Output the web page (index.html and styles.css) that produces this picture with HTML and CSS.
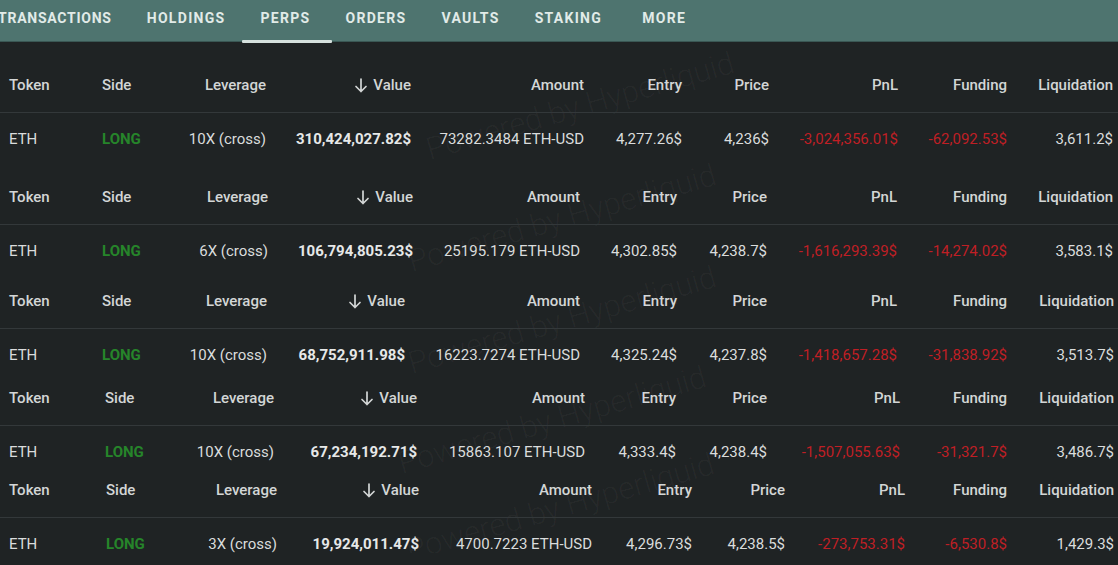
FILE: index.html
```html
<!DOCTYPE html>
<html>
<head>
<meta charset="utf-8">
<link rel="stylesheet" href="styles.css">
</head>
<body>
<nav class="nav">
  <div class="tab first">TRANSACTIONS</div>
  <div class="tab">HOLDINGS</div>
  <div class="tab active">PERPS</div>
  <div class="tab">ORDERS</div>
  <div class="tab">VAULTS</div>
  <div class="tab">STAKING</div>
  <div class="tab more">MORE</div>
</nav>

<main class="list">
  <section class="sec s1">
    <div class="wm">Powered by Hyperliquid</div>
    <div class="row head">
      <div>Token</div><div>Side</div><div class="r">Leverage</div>
      <div class="r val-h"><svg class="arr" viewBox="0 0 14 15"><path d="M7 1V13.5M2 8.5L7 13.5L12 8.5"/></svg>Value</div>
      <div class="r">Amount</div><div class="r">Entry</div><div class="r">Price</div><div class="r">PnL</div><div class="r">Funding</div><div class="r">Liquidation</div>
    </div>
    <div class="row data">
      <div>ETH</div><div class="long">LONG</div><div class="r">10X (cross)</div><div class="r b">310,424,027.82$</div>
      <div class="r">73282.3484 ETH-USD</div><div class="r">4,277.26$</div><div class="r">4,236$</div>
      <div class="r neg">-3,024,356.01$</div><div class="r neg">-62,092.53$</div><div class="r">3,611.2$</div>
    </div>
  </section>

  <section class="sec s2">
    <div class="wm">Powered by Hyperliquid</div>
    <div class="row head">
      <div>Token</div><div>Side</div><div class="r">Leverage</div>
      <div class="r val-h"><svg class="arr" viewBox="0 0 14 15"><path d="M7 1V13.5M2 8.5L7 13.5L12 8.5"/></svg>Value</div>
      <div class="r">Amount</div><div class="r">Entry</div><div class="r">Price</div><div class="r">PnL</div><div class="r">Funding</div><div class="r">Liquidation</div>
    </div>
    <div class="row data">
      <div>ETH</div><div class="long">LONG</div><div class="r">6X (cross)</div><div class="r b">106,794,805.23$</div>
      <div class="r">25195.179 ETH-USD</div><div class="r">4,302.85$</div><div class="r">4,238.7$</div>
      <div class="r neg">-1,616,293.39$</div><div class="r neg">-14,274.02$</div><div class="r">3,583.1$</div>
    </div>
  </section>

  <section class="sec s3">
    <div class="wm">Powered by Hyperliquid</div>
    <div class="row head">
      <div>Token</div><div>Side</div><div class="r">Leverage</div>
      <div class="r val-h"><svg class="arr" viewBox="0 0 14 15"><path d="M7 1V13.5M2 8.5L7 13.5L12 8.5"/></svg>Value</div>
      <div class="r">Amount</div><div class="r">Entry</div><div class="r">Price</div><div class="r">PnL</div><div class="r">Funding</div><div class="r">Liquidation</div>
    </div>
    <div class="row data">
      <div>ETH</div><div class="long">LONG</div><div class="r">10X (cross)</div><div class="r b">68,752,911.98$</div>
      <div class="r">16223.7274 ETH-USD</div><div class="r">4,325.24$</div><div class="r">4,237.8$</div>
      <div class="r neg">-1,418,657.28$</div><div class="r neg">-31,838.92$</div><div class="r">3,513.7$</div>
    </div>
  </section>

  <section class="sec s4">
    <div class="wm">Powered by Hyperliquid</div>
    <div class="row head">
      <div>Token</div><div>Side</div><div class="r">Leverage</div>
      <div class="r val-h"><svg class="arr" viewBox="0 0 14 15"><path d="M7 1V13.5M2 8.5L7 13.5L12 8.5"/></svg>Value</div>
      <div class="r">Amount</div><div class="r">Entry</div><div class="r">Price</div><div class="r">PnL</div><div class="r">Funding</div><div class="r">Liquidation</div>
    </div>
    <div class="row data">
      <div>ETH</div><div class="long">LONG</div><div class="r">10X (cross)</div><div class="r b">67,234,192.71$</div>
      <div class="r">15863.107 ETH-USD</div><div class="r">4,333.4$</div><div class="r">4,238.4$</div>
      <div class="r neg">-1,507,055.63$</div><div class="r neg">-31,321.7$</div><div class="r">3,486.7$</div>
    </div>
  </section>

  <section class="sec s5">
    <div class="wm">Powered by Hyperliquid</div>
    <div class="row head">
      <div>Token</div><div>Side</div><div class="r">Leverage</div>
      <div class="r val-h"><svg class="arr" viewBox="0 0 14 15"><path d="M7 1V13.5M2 8.5L7 13.5L12 8.5"/></svg>Value</div>
      <div class="r">Amount</div><div class="r">Entry</div><div class="r">Price</div><div class="r">PnL</div><div class="r">Funding</div><div class="r">Liquidation</div>
    </div>
    <div class="row data">
      <div>ETH</div><div class="long">LONG</div><div class="r">3X (cross)</div><div class="r b">19,924,011.47$</div>
      <div class="r">4700.7223 ETH-USD</div><div class="r">4,296.73$</div><div class="r">4,238.5$</div>
      <div class="r neg">-273,753.31$</div><div class="r neg">-6,530.8$</div><div class="r">1,429.3$</div>
    </div>
  </section>
</main>
</body>
</html>
```

FILE: styles.css
```css
* { box-sizing: border-box; }
html, body {
  margin: 0;
  padding: 0;
  background: #1f2324;
  font-family: Roboto, "Liberation Sans", sans-serif;
  overflow: hidden;
}

.nav {
  height: 42px;
  background: #4e746f;
  border-bottom: 1px solid #3a5754;
  display: flex;
  align-items: flex-start;
  margin-left: -19.5px;
}
.tab {
  position: relative;
  height: 41px;
  padding: 9px 17.5px 0;
  font-size: 14px;
  line-height: 18px;
  font-weight: 700;
  letter-spacing: 1.3px;
  color: #e1ebe8;
  white-space: nowrap;
}
.tab.first { letter-spacing: 0.75px; }
.tab.more { margin-left: 5px; }
.tab.active::after {
  content: "";
  position: absolute;
  left: -1px;
  right: -4px;
  bottom: -2px;
  height: 3px;
  background: #d6e1de;
  border-radius: 1px;
}

.list { display: flex; flex-direction: column; }

.sec { position: relative; }
.s1 { --cols: 93px 80px 84px 145px 173px 98px 87px 129px 109px 106px; --pt: 34px; }
.s2 { --cols: 93px 80px 86px 145px 167px 97px 90px 130px 110px 106px; --pt: 40px; }
.s3 { --cols: 93px 80px 85px 138px 175px 97px 90px 130px 110px 107px; --pt: 32px; }
.s4 { --cols: 96px 85px 84px 143px 168px 91px 91px 133px 107px 107px; --pt: 25px; }
.s5 { --cols: 97px 89px 82px 142px 173px 100px 93px 120px 102px 107px; --pt: 20px; }

.row {
  position: relative;
  display: grid;
  grid-template-columns: var(--cols);
  padding-left: 9px;
  font-size: 15px;
  line-height: 18px;
  white-space: nowrap;
}
.row > div { white-space: nowrap; }
.row .r { text-align: right; }

.head {
  padding-top: var(--pt);
  padding-bottom: 18px;
  border-bottom: 1px solid #33383a;
  font-weight: 500;
  color: #d3d6d6;
}
.data {
  padding-top: 17px;
  color: #dadcdc;
}
.val-h {
  display: flex;
  justify-content: flex-end;
  align-items: center;
  gap: 5px;
}
.arr {
  width: 14px;
  height: 15px;
  fill: none;
  stroke: #d3d6d6;
  stroke-width: 1.7;
  stroke-linecap: round;
  stroke-linejoin: round;
}
.b { font-weight: 700; color: #e6e8e8; }
.long { color: #26852a; font-weight: 700; }
.neg { color: #bf1f25; }

.wm {
  position: absolute;
  transform: translate(-50%, -50%) rotate(-16deg);
  font-size: 31px;
  font-weight: 300;
  color: rgba(255, 255, 255, 0.04);
  white-space: nowrap;
  pointer-events: none;
}
.s1 .wm { left: 580px; top: 64px; }
.s2 .wm { left: 562px; top: 70px; }
.s3 .wm { left: 562px; top: 60px; }
.s4 .wm { left: 552px; top: 56px; }
.s5 .wm { left: 560px; top: 46px; }
```
